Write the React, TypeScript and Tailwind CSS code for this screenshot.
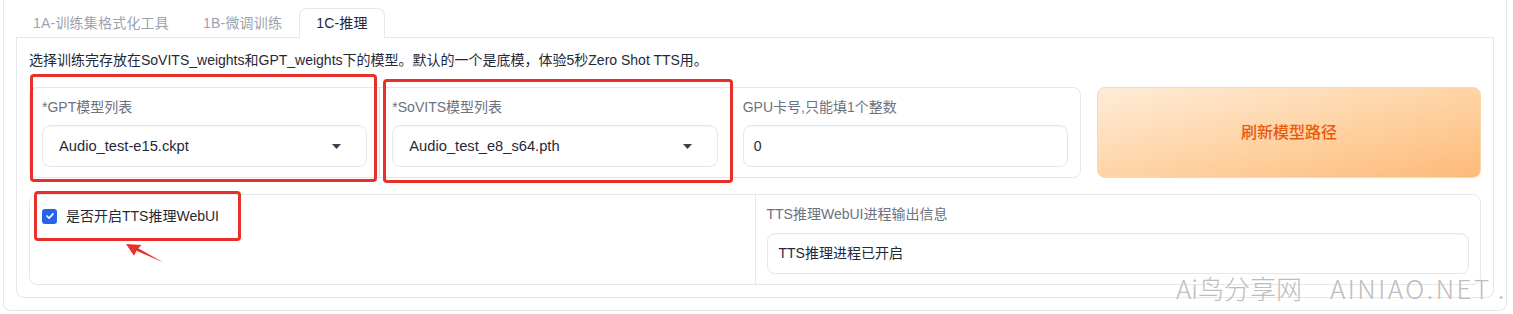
import React from 'react';

const FONT = { fontFamily: '"Liberation Sans", "Noto Sans CJK SC", sans-serif' };

// small caret used by gradio dropdowns
const Caret = () => (
  <svg width="9" height="5" viewBox="0 0 9 5" className="shrink-0">
    <path d="M0 0 L9 0 L4.5 5 Z" fill="#374151" />
  </svg>
);

const Dropdown = ({ label, value }: { label: string; value: string }) => (
  <div className="flex-1 bg-white px-[12px] py-[10px]">
    <div className="text-[14px] leading-[18px] text-[#6b7280] mb-[9px]">{label}</div>
    <div className="h-[42px] flex items-center justify-between pl-[16px] pr-[25px] rounded-lg border border-[#e5e7eb] shadow-[inset_0_1px_2px_rgba(0,0,0,0.04)] bg-white">
      <span className="text-[14.7px] text-[#1f2937]">{value}</span>
      <Caret />
    </div>
  </div>
);

const Tab = ({ label, active }: { label: string; active?: boolean }) => (
  <div
    className={`h-[30px] px-4 flex items-center text-[14px] tracking-[0.2px] border border-b-0 rounded-t-lg -mb-px ${
      active ? 'bg-white border-[#e5e7eb] text-[#1f2937]' : 'border-transparent text-[#9ca3af]'
    }`}
  >
    {label}
  </div>
);

export default function App() {
  return (
    <div className="relative w-[1513px] h-[314px] overflow-hidden bg-white" style={FONT}>
      {/* outer block */}
      <div className="ml-[3px] w-[1504px] border border-t-0 border-[#e5e7eb] rounded-b-lg px-3 pt-2 pb-3">
        {/* tabs */}
        <div className="flex border-b border-[#e5e7eb]">
          <Tab label="1A-训练集格式化工具" />
          <Tab label="1B-微调训练" />
          <Tab label="1C-推理" active />
        </div>

        {/* panel */}
        <div className="border border-t-0 border-[#e5e7eb] rounded-b-lg px-3 pt-[12px] pb-3 flex flex-col gap-4">
          <p className="text-[14px] leading-[21px] text-[#1f2937]">
            选择训练完存放在SoVITS_weights和GPT_weights下的模型。默认的一个是底模，体验5秒Zero Shot TTS用。
          </p>

          {/* row 1 */}
          <div className="flex gap-4">
            <div className="w-[1052px] flex gap-px bg-[#e5e7eb] border border-[#e5e7eb] rounded-lg overflow-hidden">
              <Dropdown label="*GPT模型列表" value="Audio_test-e15.ckpt" />
              <Dropdown label="*SoVITS模型列表" value="Audio_test_e8_s64.pth" />
              <div className="flex-1 bg-white px-[12px] py-[10px]">
                <div className="text-[14px] leading-[18px] text-[#6b7280] mb-[9px]">GPU卡号,只能填1个整数</div>
                <div className="h-[42px] flex items-center px-[10px] rounded-lg border border-[#e5e7eb] shadow-[inset_0_1px_2px_rgba(0,0,0,0.04)]">
                  <span className="text-[14px] text-[#1f2937]">0</span>
                </div>
              </div>
            </div>
            <button className="flex-1 rounded-lg border border-[#fed7aa] bg-gradient-to-br from-[#feecd8] via-[#fed4a6] to-[#fdba78] text-[#ea580c] text-[16px] font-medium">
              刷新模型路径
            </button>
          </div>

          {/* row 2 */}
          <div className="flex gap-px bg-[#e5e7eb] border border-[#e5e7eb] rounded-lg overflow-hidden">
            <div className="flex-1 bg-white px-[11px] py-[12px]">
              <label className="flex items-center gap-[9px]">
                <span className="ml-[1px] w-[15px] h-[15px] rounded-[3px] bg-[#2563eb] flex items-center justify-center">
                  <svg width="10" height="10" viewBox="0 0 10 10">
                    <path d="M2 5.2 L4.1 7.2 L8 2.9" stroke="white" strokeWidth="1.7" fill="none" strokeLinecap="round" strokeLinejoin="round" />
                  </svg>
                </span>
                <span className="text-[14px] leading-[18px] text-[#1f2937]">是否开启TTS推理WebUI</span>
              </label>
            </div>
            <div className="flex-1 bg-white px-[11px] py-[10px]">
              <div className="text-[14px] leading-[18px] text-[#6b7280] mb-[10px]">TTS推理WebUI进程输出信息</div>
              <div className="h-[41px] flex items-center px-[11px] rounded-lg border border-[#e5e7eb] shadow-[inset_0_1px_2px_rgba(0,0,0,0.04)]">
                <span className="text-[14px] text-[#1f2937]">TTS推理进程已开启</span>
              </div>
            </div>
          </div>
        </div>
      </div>

      {/* red annotations over the screenshot */}
      <div className="absolute left-[30px] top-[74px] w-[347px] h-[108px] border-[3px] border-[#e8302a] rounded-[4px] pointer-events-none" />
      <div className="absolute left-[383px] top-[79px] w-[350px] h-[104px] border-[3px] border-[#e8302a] rounded-[4px] pointer-events-none" />
      <div className="absolute left-[34px] top-[191px] w-[207px] h-[50px] border-[3px] border-[#e8302a] rounded-[4px] pointer-events-none" />
      <svg className="absolute left-0 top-0 pointer-events-none" width="1513" height="314">
        <path d="M126 244 L141.5 245 L138.3 248.3 L163.5 262.6 L136.6 250.8 L134 255.8 Z" fill="#e8302a" />
      </svg>

      {/* watermark */}
      <div
        className="absolute left-[1176px] top-[270px] flex items-center text-[26px] font-light text-[#bdbdbd] leading-[36px] pointer-events-none whitespace-nowrap"
        style={{ fontFamily: '"Noto Sans CJK SC", "Noto Sans", sans-serif' }}
      >
        <span>Ai鸟分享网</span>
        <span className="ml-[28px] tracking-[2.5px]">AINIAO.NET</span>
        <span className="ml-[6px]">.</span>
      </div>
    </div>
  );
}
